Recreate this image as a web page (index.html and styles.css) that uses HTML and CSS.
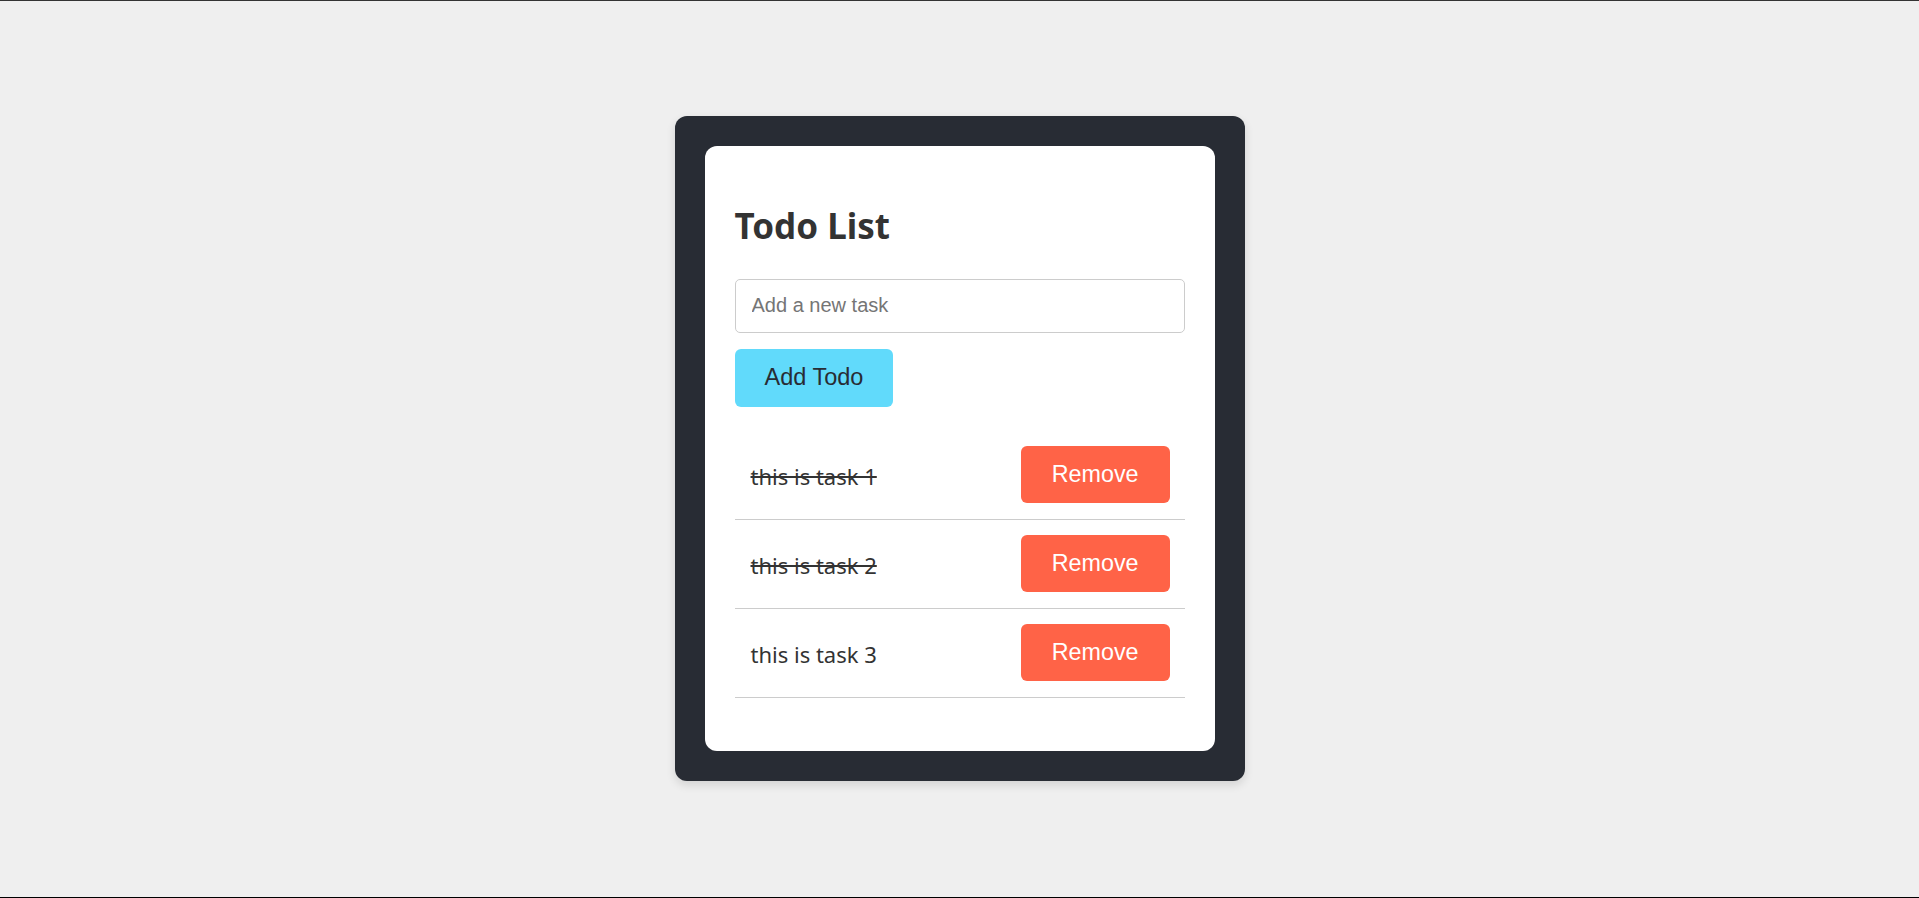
FILE: index.html
```html
<!DOCTYPE html>
<html lang="en">
<head>
<meta charset="utf-8">
<title>Todo List</title>
<link rel="stylesheet" href="styles.css">
</head>
<body>
  <div class="frame">
    <div class="card">
      <h1 class="title">Todo List</h1>
      <input class="task-input" type="text" placeholder="Add a new task">
      <button class="add-btn">Add Todo</button>
      <ul class="todo-list">
        <li class="todo-item"><span class="todo-text done">this is task 1</span><button class="remove-btn">Remove</button></li>
        <li class="todo-item"><span class="todo-text done">this is task 2</span><button class="remove-btn">Remove</button></li>
        <li class="todo-item"><span class="todo-text">this is task 3</span><button class="remove-btn">Remove</button></li>
      </ul>
    </div>
  </div>
</body>
</html>
```

FILE: styles.css
```css
* { box-sizing: border-box; }

html, body { margin: 0; padding: 0; }

body {
  min-height: 100vh;
  background: #efefef;
  border-top: 1px solid #333;
  border-bottom: 1px solid #000;
  display: flex;
  align-items: center;
  justify-content: center;
  font-family: "Noto Sans", "Open Sans", sans-serif;
  color: #333;
}

.frame {
  width: 570px;
  margin-bottom: 2px;
  padding: 30px;
  background: #282c34;
  border-radius: 12px;
  box-shadow: 0 4px 10px rgba(0, 0, 0, 0.12);
}

.card {
  background: #fff;
  border-radius: 12px;
  padding: 31px 30px 53px;
}

.title {
  margin: 23px 0 28px;
  font-size: 35px;
  line-height: 51px;
  font-weight: 700;
  color: #333;
}

.task-input {
  display: block;
  width: 100%;
  height: 54px;
  border: 1px solid #ccc;
  border-radius: 5px;
  padding: 0 16px;
  font-family: "Liberation Sans", Arial, sans-serif;
  font-size: 20px;
  color: #333;
  outline: none;
}

.task-input::placeholder { color: #757575; }

.add-btn {
  display: block;
  margin-top: 16px;
  height: 58px;
  padding: 0 30px;
  border: none;
  border-radius: 6px;
  background: #61dafb;
  color: #282c34;
  font-family: "Liberation Sans", Arial, sans-serif;
  font-size: 23.5px;
}

.todo-list {
  list-style: none;
  margin: 24px 0 0;
  padding: 0;
}

.todo-item {
  display: flex;
  align-items: center;
  justify-content: space-between;
  height: 89px;
  padding: 0 15px 0 16px;
  border-bottom: 1px solid #ccc;
}

.todo-text {
  font-size: 22px;
  color: #333;
  padding-top: 2px;
}

.todo-text.done { text-decoration: line-through; text-decoration-thickness: 2px; }

.remove-btn {
  height: 57px;
  padding: 0 31px;
  border: none;
  border-radius: 6px;
  background: #ff6347;
  color: #fff;
  font-family: "Liberation Sans", Arial, sans-serif;
  font-size: 23.3px;
}
```
